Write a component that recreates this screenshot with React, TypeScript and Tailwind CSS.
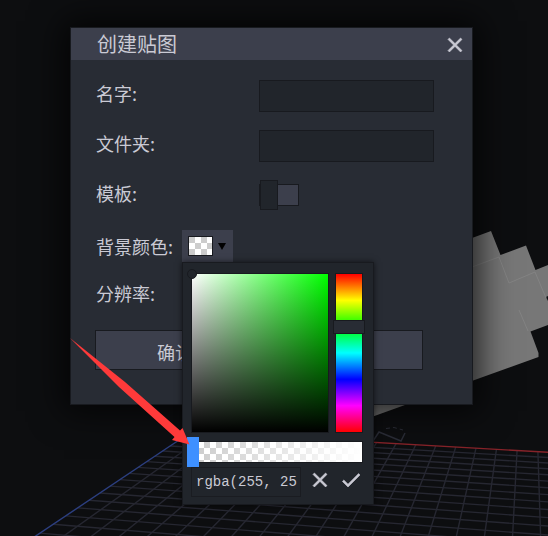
import React from "react";
import { MdCheck, MdClose } from "react-icons/md";

type Point = [number, number];

/* Perspective of the ground grid: origin corner and the two vanishing points. */
const ORIGIN: Point = [191, 432];
const VANISH_U: Point = [-3810, 205];
const VANISH_V: Point = [530, 205];
const DEPTH_U = 225.6;
const DEPTH_V = 51.9;

function project(u: number, v: number): Point {
  const a = u / DEPTH_U;
  const b = v / DEPTH_V;
  const w = 1 - a - b;
  return [
    (ORIGIN[0] - a * VANISH_U[0] - b * VANISH_V[0]) / w,
    (ORIGIN[1] - a * VANISH_U[1] - b * VANISH_V[1]) / w,
  ];
}

function GridLine({ from, to, color }: { from: Point; to: Point; color: string }) {
  return <line x1={from[0]} y1={from[1]} x2={to[0]} y2={to[1]} stroke={color} strokeWidth="1.4" />;
}

function Viewport() {
  const alongU = Array.from({ length: 24 }, (_, i) => i + 1);
  const alongV = Array.from({ length: 48 }, (_, i) => i + 1);
  return (
    <svg className="absolute inset-0 h-full w-full" aria-hidden="true">
      {alongU.map((v) => (
        <GridLine key={"u" + v} from={project(0, v)} to={project(48, v)} color="#262731" />
      ))}
      {alongV.map((u) => (
        <GridLine key={"v" + u} from={project(u, 0)} to={project(u, 24)} color="#262731" />
      ))}
      <GridLine from={project(0, 0)} to={project(48, 0)} color="#862329" />
      <GridLine from={project(0, 0)} to={project(0, 24)} color="#2c3f80" />
      <path d="M373 441 L379 432 L401 441 L405 433" fill="none" stroke="#2a2c36" strokeWidth="1.5" />
      <path d="M386 428.500 L394 427.500 L403 430" fill="none" stroke="#2a2c36" strokeWidth="1" strokeDasharray="4 3" />
      <path
        d="M350 283 L491 231 L500.500 255 L526 245.500 L535.500 270 L548 265 V296 L546 297 L548 301 V325 L530.500 331.500 L538.500 353 V357 L373 416.500 L350 420 Z"
        fill="#777777"
      />
      <path d="M472 267 L499 257 L509 283 L535 272 M535 272 L546 298 M519 310 L528 331" fill="none" stroke="#838383" strokeWidth="1" />
    </svg>
  );
}

function Checker({ className }: { className: string }) {
  return (
    <span
      className={
        "block bg-[repeating-conic-gradient(#ffffff_0_25%,#cccccc_0_50%)] bg-[length:12px_12px] " + className
      }
    />
  );
}

const iconClass = "[&>path:last-child]:stroke-current [&>path:last-child]:stroke-[0.6]";

function ColorPicker() {
  return (
    <div
      role="dialog"
      aria-label="背景颜色"
      className="absolute left-0 top-full z-10 flex w-48 flex-col border border-[#181a1f] bg-[#21252b] px-[9px] pb-[7px] pt-[11px] shadow-[0_0_6px_rgba(0,0,0,0.6)]"
    >
      <div className="flex gap-2">
        <div className="relative h-[158px] w-[136px] bg-[linear-gradient(to_top,#000,transparent),linear-gradient(to_right,#fff,#0f0)] outline outline-[#181a1f]">
          <span className="absolute -left-[5px] -top-[5px] size-[10px] rounded-full border border-[#181a1f] bg-[#21252b]" />
        </div>
        <div className="relative h-[158px] w-[26px] bg-[linear-gradient(to_bottom,#f00,#ff0,#0f0,#0ff,#00f,#f0f,#f00)] outline outline-[#181a1f]">
          <input
            type="range"
            aria-label="hue"
            min={0}
            max={360}
            defaultValue={120}
            className="absolute -left-[3px] -top-[7px] h-[172px] w-8 appearance-none bg-transparent [writing-mode:vertical-lr] [&::-webkit-slider-thumb]:h-[14px] [&::-webkit-slider-thumb]:w-8 [&::-webkit-slider-thumb]:appearance-none [&::-webkit-slider-thumb]:border [&::-webkit-slider-thumb]:border-[#181a1f] [&::-webkit-slider-thumb]:bg-[#282c34]"
          />
        </div>
      </div>
      <div className="relative mt-[10px] h-5 w-[170px] outline outline-[#181a1f]">
        <Checker className="h-full w-full" />
        <span className="absolute inset-0 bg-[linear-gradient(to_right,transparent,#fff)]" />
        <input
          type="range"
          aria-label="alpha"
          min={0}
          max={100}
          defaultValue={0}
          className="absolute -left-[5px] -top-[5px] h-[30px] w-[181px] appearance-none bg-transparent [&::-webkit-slider-thumb]:h-[30px] [&::-webkit-slider-thumb]:w-3 [&::-webkit-slider-thumb]:appearance-none [&::-webkit-slider-thumb]:bg-[#3e90ff]"
        />
      </div>
      <div className="-ml-px mt-[5px] flex h-[30px] items-start">
        <input
          type="text"
          aria-label="color value"
          defaultValue="rgba(255, 255, 255, 0)"
          className="h-[30px] w-[110px] border border-[#1a1c21] bg-[#21252b] pl-1 pr-[3px] font-['Liberation_Mono',monospace] text-[14px] text-[#cacad4] outline-none"
        />
        <button type="button" aria-label="cancel" className="ml-[7px] mt-px text-[#cacad4]">
          <MdClose size={24} className={iconClass} />
        </button>
        <button type="button" aria-label="confirm" className="ml-[7px] mt-px text-[#cacad4]">
          <MdCheck size={24} className={iconClass} />
        </button>
      </div>
    </div>
  );
}

const fieldClass = "h-8 min-w-0 flex-1 border border-[#181a1f] bg-[#21252b] px-2 text-[#cacad4] outline-none";
const labelClass = "w-[164px] shrink-0 pl-px leading-[26px]";
const actionClass = "h-10 flex-1 border border-[#181a1f] bg-[#3c3f4c] pt-1";

function TextureDialog() {
  return (
    <form
      className="relative w-full border border-[#181a1f] bg-[#282c34] shadow-[0_0_32px_6px_rgba(0,0,0,0.75)]"
      onSubmit={(e) => e.preventDefault()}
    >
      <header className="flex h-8 items-center justify-between bg-[#3c3f4c] pl-[26px] pr-[5px]">
        <h1 className="text-[20px] leading-8">创建贴图</h1>
        <button type="button" aria-label="close" className="mt-[2px]">
          <MdClose size={24} className={iconClass} />
        </button>
      </header>
      <div className="flex flex-col gap-[18px] pb-[34px] pl-6 pr-[38px] pt-5">
        <div className="flex h-8">
          <label htmlFor="name" className={labelClass}>名字:</label>
          <input id="name" type="text" className={fieldClass} />
        </div>
        <div className="flex h-8">
          <label htmlFor="folder" className={labelClass}>文件夹:</label>
          <input id="folder" type="text" className={fieldClass} />
        </div>
        <div className="flex h-8">
          <label htmlFor="template" className={labelClass}>模板:</label>
          <input
            id="template"
            type="checkbox"
            className="relative mt-1 h-[22px] w-10 appearance-none border border-[#181a1f] bg-[#3c3f4c] before:absolute before:-top-[5px] before:left-0 before:h-[30px] before:w-[18px] before:border before:border-[#181a1f] before:bg-[#21252b]"
          />
        </div>
        <div className="flex h-8 items-center">
          <label htmlFor="background" className="w-[87px] shrink-0 pl-px leading-[26px]">背景颜色:</label>
          <div className="relative">
            <button
              id="background"
              type="button"
              className="flex h-8 w-[51px] items-center gap-[5px] bg-[#3c3f4c] pl-[6px]"
            >
              <Checker className="h-5 w-[25px] border border-[#181a1f]" />
              <svg width="8" height="8" viewBox="0 0 8 8" aria-hidden="true">
                <path d="M0 1 H8 L4 8 Z" fill="#000" />
              </svg>
            </button>
            <ColorPicker />
          </div>
        </div>
        <div className="flex h-8">
          <span className={labelClass}>分辨率:</span>
        </div>
        <div className="mr-[11px] flex gap-2">
          <button type="submit" className={actionClass}>确认</button>
          <button type="button" className={actionClass}>取消</button>
        </div>
      </div>
    </form>
  );
}

export default function App() {
  return (
    <main className="relative min-h-screen overflow-hidden bg-[#0d0e10] pb-10 pl-[70px] pr-[75px] pt-[27px] font-['Noto_Sans_CJK_SC',sans-serif] text-[18px] font-normal text-[#cacad4]">
      <Viewport />
      <TextureDialog />
      <svg className="pointer-events-none absolute left-[70px] top-[337px] z-20" width="120" height="108" viewBox="0 0 120 108" aria-hidden="true">
        <path d="M0 1 L55 45 L110 93.500 L112.500 91 L119.500 107.500 L102 103 L104.500 100 L49 50 Z" fill="#ff3a3a" />
      </svg>
    </main>
  );
}
